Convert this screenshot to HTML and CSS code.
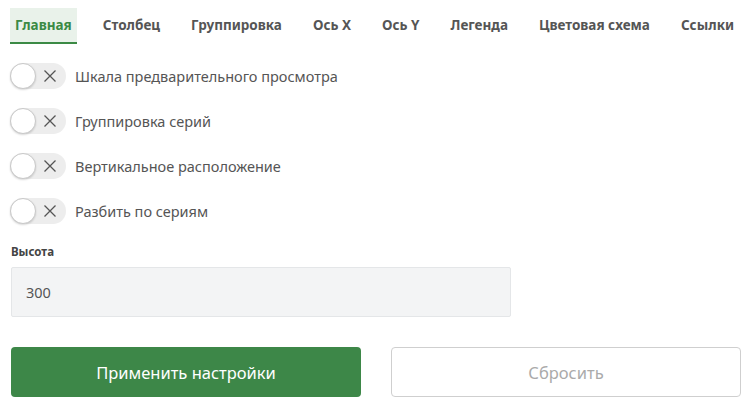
FILE: index.html
```html
<!DOCTYPE html>
<html lang="ru">
<head>
<meta charset="utf-8">
<link rel="stylesheet" href="styles.css">
</head>
<body>
<nav class="tabs">
  <div class="tab active">Главная</div>
  <div class="tab">Столбец</div>
  <div class="tab">Группировка</div>
  <div class="tab">Ось X</div>
  <div class="tab">Ось Y</div>
  <div class="tab">Легенда</div>
  <div class="tab">Цветовая схема</div>
  <div class="tab">Ссылки</div>
</nav>
<main class="panel">
  <div class="toggles">
    <label class="row"><span class="switch"><span class="knob"></span><svg class="xicon" viewBox="0 0 14 14"><path d="M1.5 1.5L12.5 12.5M12.5 1.5L1.5 12.5"/></svg></span><span class="text">Шкала предварительного просмотра</span></label>
    <label class="row"><span class="switch"><span class="knob"></span><svg class="xicon" viewBox="0 0 14 14"><path d="M1.5 1.5L12.5 12.5M12.5 1.5L1.5 12.5"/></svg></span><span class="text">Группировка серий</span></label>
    <label class="row"><span class="switch"><span class="knob"></span><svg class="xicon" viewBox="0 0 14 14"><path d="M1.5 1.5L12.5 12.5M12.5 1.5L1.5 12.5"/></svg></span><span class="text">Вертикальное расположение</span></label>
    <label class="row"><span class="switch"><span class="knob"></span><svg class="xicon" viewBox="0 0 14 14"><path d="M1.5 1.5L12.5 12.5M12.5 1.5L1.5 12.5"/></svg></span><span class="text">Разбить по сериям</span></label>
  </div>
  <div class="field">
    <div class="field-label">Высота</div>
    <div class="input">300</div>
  </div>
  <div class="actions">
    <button class="btn primary">Применить настройки</button>
    <button class="btn secondary">Сбросить</button>
  </div>
</main>
</body>
</html>
```
FILE: styles.css
```css
* { box-sizing: border-box; }
body {
  margin: 0;
  background: #fff;
  font-family: "Noto Sans", "Open Sans", sans-serif;
  color: #555;
}
.tabs {
  display: flex;
  gap: 21px;
  padding: 8px 0 0 10px;
  white-space: nowrap;
}
.tab {
  padding: 0 5px;
  height: 36px;
  line-height: 34px;
  font-size: 13.5px;
  font-weight: 700;
  color: #555;
  border-bottom: 2px solid transparent;
}
.tab.active {
  background: #e9f2ea;
  color: #3b8a45;
  border-bottom-color: #3b8a45;
}
.panel {
  padding: 0 2px 0 11px;
}
.toggles {
  display: flex;
  flex-direction: column;
  gap: 19px;
  padding-top: 19px;
  margin-left: -1px;
}
.row {
  display: flex;
  align-items: center;
  gap: 9px;
  height: 26px;
}
.switch {
  position: relative;
  width: 56px;
  height: 26px;
  border-radius: 13px;
  background: #ededed;
  flex: none;
}
.knob {
  position: absolute;
  left: 0;
  top: 0;
  width: 26px;
  height: 26px;
  border-radius: 50%;
  background: #fff;
  border: 1px solid #c9c9c9;
  box-shadow: 0 1px 2px rgba(0,0,0,0.15);
}
.xicon {
  position: absolute;
  left: 33px;
  top: 6px;
  width: 14px;
  height: 14px;
  fill: none;
  stroke: #555;
  stroke-width: 1.3;
}
.text {
  font-size: 14.5px;
  color: #555;
}
.field {
  padding-top: 20px;
}
.field-label {
  font-size: 11.5px;
  font-weight: 700;
  color: #444;
  line-height: 16px;
  height: 23px;
}
.input {
  width: 500px;
  height: 50px;
  background: #f3f4f5;
  border: 1px solid #e4e6e8;
  border-radius: 2px;
  padding: 0 14px;
  display: flex;
  align-items: center;
  font-size: 14.5px;
  color: #555;
}
.actions {
  display: grid;
  grid-template-columns: 1fr 1fr;
  gap: 30px;
  padding-top: 30px;
}
.btn {
  height: 50px;
  border-radius: 4px;
  font-family: inherit;
  font-size: 16.5px;
}
.primary {
  background: #3d8748;
  border: none;
  color: #fff;
}
.secondary {
  background: #fff;
  border: 1px solid #cfcfcf;
  color: #aaa;
}
```
